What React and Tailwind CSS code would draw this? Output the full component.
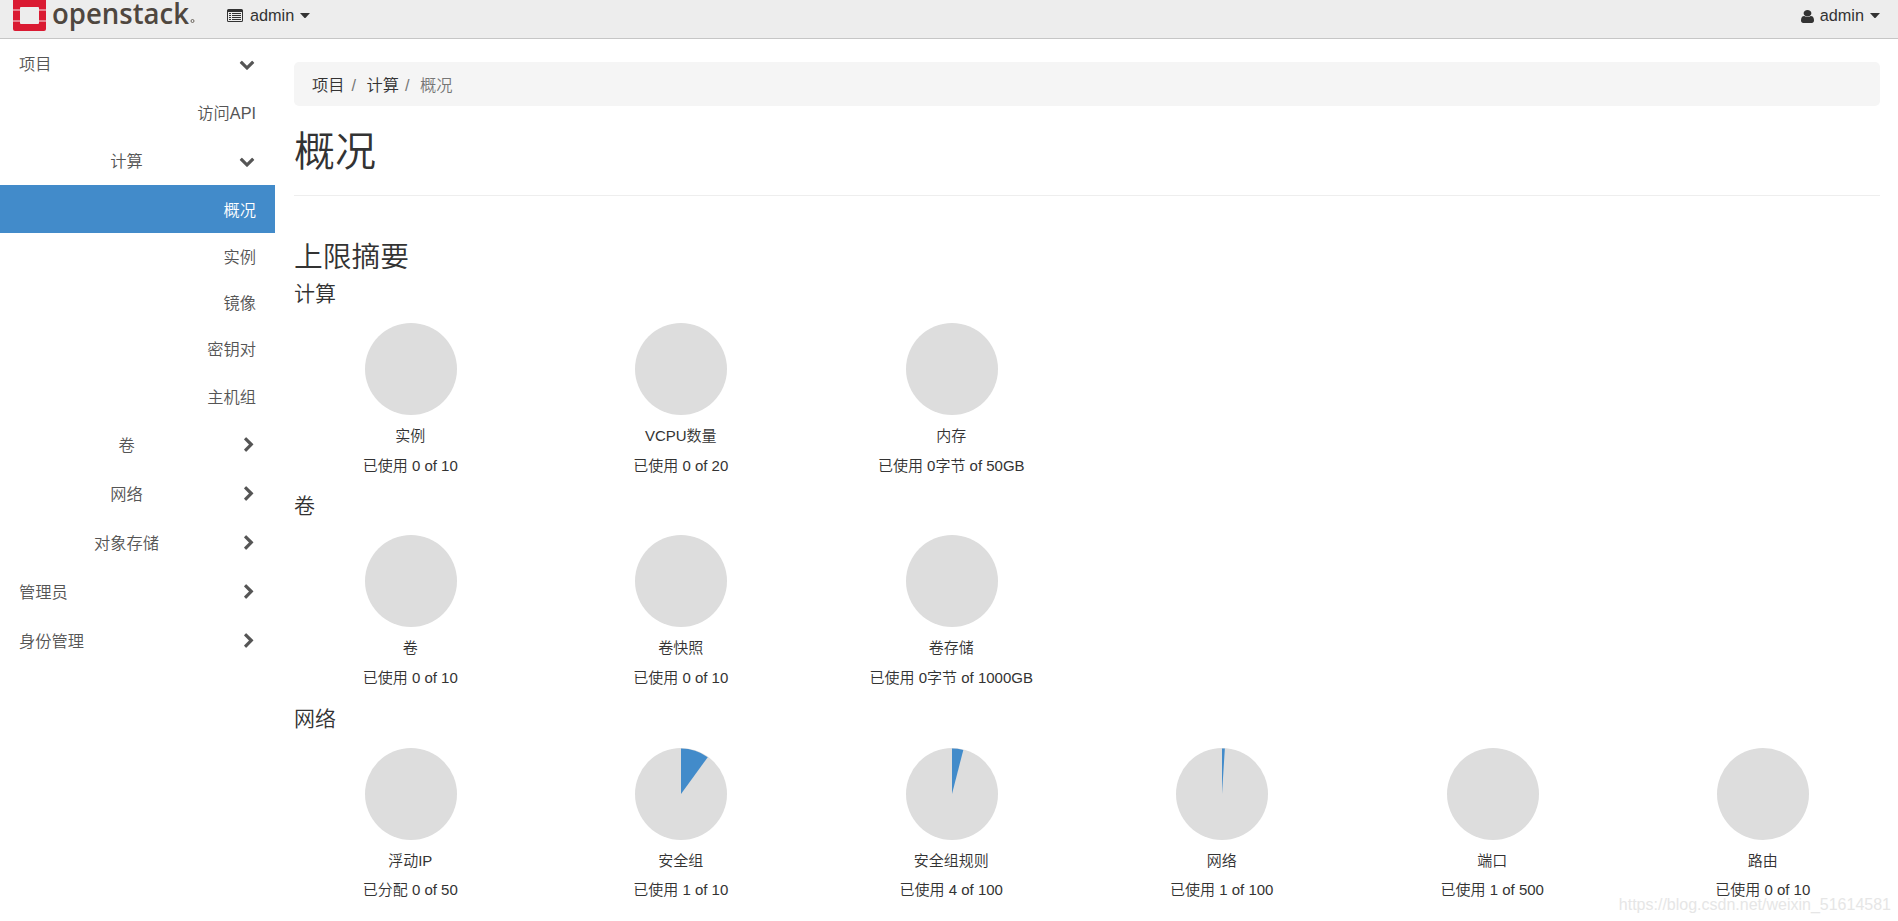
const navItems = [
  { label: "项目", level: 1, open: true, height: "h-[49px]" },
  { label: "访问API", level: 3, height: "h-[48px]" },
  { label: "计算", level: 2, open: true, height: "h-[49px]" },
  { label: "概况", level: 3, active: true, height: "h-[48px]" },
  { label: "实例", level: 3, height: "h-[46px]" },
  { label: "镜像", level: 3, height: "h-[46px]" },
  { label: "密钥对", level: 3, height: "h-[47px]" },
  { label: "主机组", level: 3, height: "h-[48px]" },
  { label: "卷", level: 2, height: "h-[49px]" },
  { label: "网络", level: 2, height: "h-[49px]" },
  { label: "对象存储", level: 2, height: "h-[49px]" },
  { label: "管理员", level: 1, height: "h-[49px]" },
  { label: "身份管理", level: 1, height: "h-[49px]" },
];

const quotaSections = [
  {
    title: "计算",
    charts: [
      { name: "实例", text: "已使用 0 of 10", percent: 0 },
      { name: "VCPU数量", text: "已使用 0 of 20", percent: 0 },
      { name: "内存", text: "已使用 0字节 of 50GB", percent: 0 },
    ],
  },
  {
    title: "卷",
    charts: [
      { name: "卷", text: "已使用 0 of 10", percent: 0 },
      { name: "卷快照", text: "已使用 0 of 10", percent: 0 },
      { name: "卷存储", text: "已使用 0字节 of 1000GB", percent: 0 },
    ],
  },
  {
    title: "网络",
    charts: [
      { name: "浮动IP", text: "已分配 0 of 50", percent: 0 },
      { name: "安全组", text: "已使用 1 of 10", percent: 10 },
      { name: "安全组规则", text: "已使用 4 of 100", percent: 4 },
      { name: "网络", text: "已使用 1 of 100", percent: 1 },
      { name: "端口", text: "已使用 1 of 500", percent: 0 },
      { name: "路由", text: "已使用 0 of 10", percent: 0 },
    ],
  },
];

const ChevronDown = () => (
  <svg viewBox="0 0 1792 1792" className="-ml-px size-4 fill-current">
    <path d="M1683 808l-742 741q-19 19-45 19t-45-19l-742-741q-19-19-19-45.500t19-45.500l166-165q19-19 45-19t45 19l531 531 531-531q19-19 45-19t45 19l166 165q19 19 19 45.500t-19 45.500z" />
  </svg>
);

const ChevronRight = () => (
  <svg viewBox="0 0 1792 1792" className="ml-px size-4 fill-current">
    <path d="M1363 877l-742 742q-19 19-45 19t-45-19l-166-166q-19-19-19-45t19-45l531-531-531-531q-19-19-19-45t19-45l166-166q19-19 45-19t45 19l742 742q19 19 19 45t-19 45z" />
  </svg>
);

const UserIcon = () => (
  <svg
    viewBox="256 128 1280 1536"
    preserveAspectRatio="none"
    className="mt-px h-[13px] w-[13px] fill-current"
  >
    <path d="M1536 1399q0 109-62.500 187t-150.500 78h-854q-88 0-150.500-78t-62.500-187q0-85 8.500-160.500t31.500-152 58.500-131 94-89 134.500-34.500q131 128 313 128t313-128q76 0 134.500 34.500t94 89 58.500 131 31.500 152 8.500 160.500zm-256-887q0 159-112.500 271.500t-271.500 112.500-271.500-112.500-112.500-271.500 112.500-271.500 271.500-112.500 271.500 112.500 112.500 271.500z" />
  </svg>
);

const ListIcon = () => (
  <svg viewBox="0 0 16 13" className="h-[13px] w-4 fill-current">
    <path
      fillRule="evenodd"
      d="M1.500 0h13A1.500 1.500 0 0 1 16 1.500v10a1.500 1.500 0 0 1-1.500 1.500h-13A1.500 1.500 0 0 1 0 11.500v-10A1.500 1.500 0 0 1 1.500 0zM1 3v8.500q0 .5.5.5h13q.5 0 .5-.5V3z"
    />
    <path d="M2 4h2v1H2zM5 4h9v1H5zM2 6h2v1H2zM5 6h9v1H5zM2 8h2v1H2zM5 8h9v1H5zM2 10h2v1H2zM5 10h9v1H5z" />
  </svg>
);

const Caret = () => (
  <svg viewBox="0 0 10 5" preserveAspectRatio="none" className="h-[5.500px] w-[10px] fill-current">
    <path d="M0 0h10L5 5z" />
  </svg>
);

const Logo = () => (
  <div className="flex w-[181px] items-start">
    <svg viewBox="0 0 33 31" className="h-[31px] w-[33px] shrink-0">
      <path
        fill="#da1a32"
        d="M0 0h33v9h-7V8q0-1-1-1H8q-1 0-1 1v1H0zM0 11h7v9H0zM26 11h7v9h-7zM0 22h7v1q0 1 1 1h17q1 0 1-1v-1h7v7q0 2-2 2H2q-2 0-2-2z"
      />
      <path fill="#e8808e" d="M0 9h7v2H0zM26 9h7v2h-7zM0 20h7v2H0zM26 20h7v2h-7z" />
    </svg>
    <svg viewBox="0 0 142 31" className="ml-[7px] h-[31px] w-[142px] shrink-0 overflow-visible">
      <text
        x="-1"
        y="23.500"
        textLength="137"
        lengthAdjust="spacingAndGlyphs"
        fill="#4f473f"
        className="font-['Open_Sans',sans-serif] text-[29px] font-semibold"
      >
        openstack
      </text>
      <circle cx="139.500" cy="21" r="1.500" fill="none" stroke="#4f473f" strokeWidth="0.800" />
    </svg>
  </div>
);

const Header = () => (
  <header className="flex h-[39px] items-start justify-between border-b border-[#c6c6c6] bg-[#ededed] pr-[18px] pl-[13px]">
    <div className="flex">
      <Logo />
      <div className="ml-[33px] flex h-[31px] items-center">
        <span className="-mt-px">
          <ListIcon />
        </span>
        <span className="ml-[7px]">admin</span>
        <span className="ml-[6px]">
          <Caret />
        </span>
      </div>
    </div>
    <div className="flex h-[31px] items-center">
      <UserIcon />
      <span className="ml-[6px]">admin</span>
      <span className="ml-[6px]">
        <Caret />
      </span>
    </div>
  </header>
);

const NavItem = ({ item }) => {
  if (item.level === 3) {
    return (
      <li
        className={`flex items-center justify-end pt-[2px] pr-[19px] ${item.height} ${
          item.active ? "bg-[#428bca] text-white" : ""
        }`}
      >
        {item.label}
      </li>
    );
  }

  return (
    <li
      className={`grid grid-cols-[1fr_16px] items-center pr-[19px] pl-[19px] ${item.height}`}
    >
      <span className={`pt-px ${item.level === 2 ? "pr-[6px] text-center" : ""}`}>
        {item.label}
      </span>
      {item.open ? <ChevronDown /> : <ChevronRight />}
    </li>
  );
};

const Sidebar = () => (
  <nav className="w-[275px] shrink-0 text-[#555]">
    <ul>
      {navItems.map((item) => (
        <NavItem key={item.label} item={item} />
      ))}
    </ul>
  </nav>
);

const PieChart = ({ percent }) => {
  const angle = (percent / 100) * 2 * Math.PI;
  const x = 46 + 45.5 * Math.sin(angle);
  const y = 46 - 45.5 * Math.cos(angle);

  return (
    <svg viewBox="0 0 92 92" className="ml-[0.500px] size-[92px]">
      <circle cx="46" cy="46" r="46" fill="#ddd" />
      {percent > 0 && (
        <path d={`M46 46V0.500A45.500 45.500 0 0 1 ${x} ${y}z`} fill="#428bca" />
      )}
    </svg>
  );
};

const QuotaSection = ({ section }) => (
  <section className="h-[212.400px]">
    <h4 className="pl-[19px] text-[21px] leading-[24px]">{section.title}</h4>
    <div className="mt-[17px] grid grid-cols-6 text-[15px]">
      {section.charts.map((chart) => (
        <div key={chart.name} className="flex flex-col items-center">
          <PieChart percent={chart.percent} />
          <div className="mt-[10px] leading-[22px]">{chart.name}</div>
          <div className="mt-[7.500px] leading-[22px]">{chart.text}</div>
        </div>
      ))}
    </div>
  </section>
);

const App = () => {
  return (
    <div className="relative h-[921px] overflow-hidden bg-white font-['Liberation_Sans','Noto_Sans_CJK_SC',sans-serif] text-[16.25px] leading-[23px] font-[350] text-[#333]">
      <Header />
      <div className="flex">
        <Sidebar />
        <main className="min-w-0 flex-1 pt-[23px]">
          <div className="mr-[18px] ml-[19px]">
            <ol className="flex h-[44px] items-center rounded-[5px] bg-[#f5f5f5] pt-[2px] pl-[18px]">
              <li>项目</li>
              <li className="w-[22px] pl-[7px] text-[#777]">/</li>
              <li>计算</li>
              <li className="w-[21px] pl-[6px] text-[#777]">/</li>
              <li className="text-[#777]">概况</li>
            </ol>
            <h1 className="mt-[24px] h-[66px] border-b border-[#eee] text-[41px] leading-[45px]">
              概况
            </h1>
            <h2 className="mt-[44px] text-[28.75px] leading-[34px]">
              上限摘要
            </h2>
          </div>
          <div className="mt-[8px]">
            {quotaSections.map((section) => (
              <QuotaSection key={section.title} section={section} />
            ))}
          </div>
        </main>
      </div>
      <div className="absolute right-[7px] bottom-[5px] text-[16px] text-[#e6e6e6]">
        https://blog.csdn.net/weixin_51614581
      </div>
    </div>
  );
};

export default App;
